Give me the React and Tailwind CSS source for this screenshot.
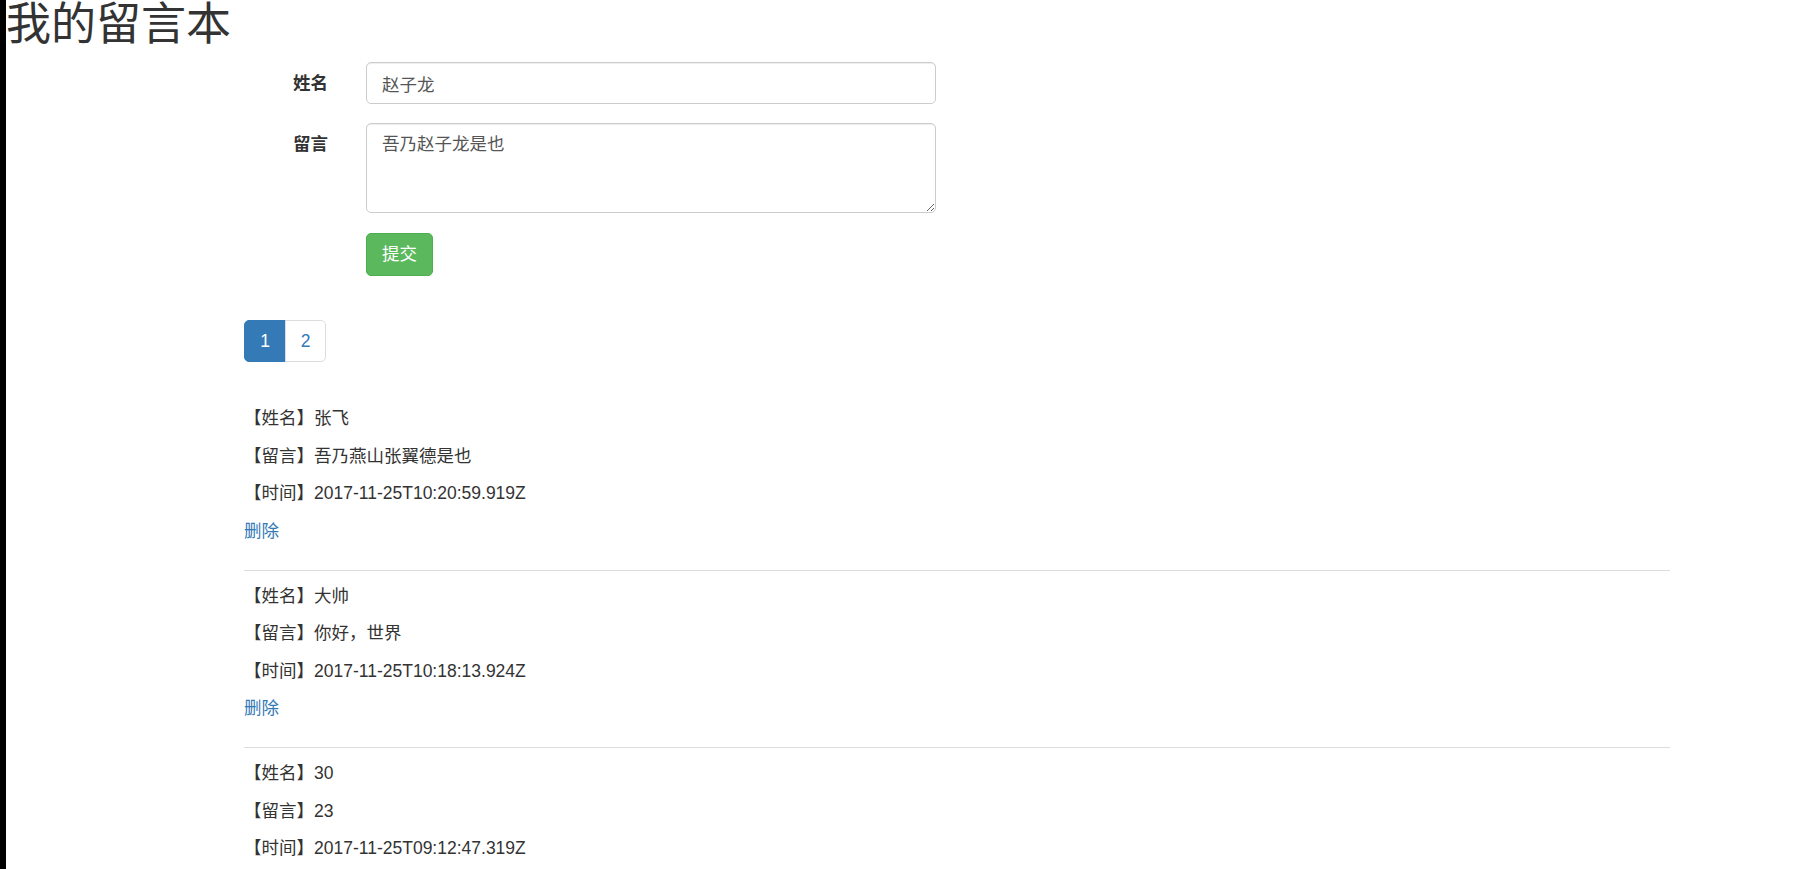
import React from "react";

const items = [
  { name: "张飞", msg: "吾乃燕山张翼德是也", time: "2017-11-25T10:20:59.919Z" },
  { name: "大帅", msg: "你好，世界", time: "2017-11-25T10:18:13.924Z" },
  { name: "30", msg: "23", time: "2017-11-25T09:12:47.319Z" },
];

function Item({ it }) {
  return (
    <div>
      <p className="leading-[25px] mb-[12.5px]">【姓名】{it.name}</p>
      <p className="leading-[25px] mb-[12.5px]">【留言】{it.msg}</p>
      <p className="leading-[25px] mb-[12.5px]">【时间】{it.time}</p>
      <div className="leading-[25px]">
        <a href="#" className="text-[#337ab7] no-underline">删除</a>
      </div>
      <hr className="mt-[26px] mb-[13px] border-0 border-t border-[#dddddd]" />
    </div>
  );
}

export default function App() {
  return (
    <div className="h-[869px] overflow-hidden bg-white border-l-[6px] border-black text-[#333333] text-[17.5px] font-[family-name:'Liberation_Sans','Noto_Sans_CJK_SC',sans-serif]">
      <h1 className="text-[45px] leading-[1.1] font-normal text-[#333333]">我的留言本</h1>

      <div className="ml-[238px] w-[1426px]">
        <form className="mt-[12.5px]" onSubmit={(e) => e.preventDefault()}>
          <div className="flex items-start">
            <label className="w-[84px] text-right font-bold pt-[8.75px] leading-[25px]">姓名</label>
            <input
              type="text"
              defaultValue="赵子龙"
              className="ml-[38px] w-[570px] h-[42px] px-[15px] py-[7.5px] leading-[25px] text-[#555555] bg-white border border-[#cccccc] rounded-[5px] shadow-[inset_0_1px_1px_rgba(0,0,0,0.075)] outline-none"
            />
          </div>
          <div className="flex items-start mt-[19px]">
            <label className="w-[84px] text-right font-bold pt-[8.75px] leading-[25px]">留言</label>
            <textarea
              defaultValue="吾乃赵子龙是也"
              className="ml-[38px] w-[570px] h-[90px] px-[15px] py-[7.5px] leading-[25px] text-[#555555] bg-white border border-[#cccccc] rounded-[5px] shadow-[inset_0_1px_1px_rgba(0,0,0,0.075)] outline-none"
            />
          </div>
          <div className="mt-[20px] ml-[122px]">
            <button
              type="submit"
              className="h-[43px] px-[15px] leading-[25px] text-white bg-[#5cb85c] border border-[#4cae4c] rounded-[5px]"
            >
              提交
            </button>
          </div>
        </form>

        <div className="mt-[44px] flex">
          <a href="#" className="h-[42px] w-[42px] flex items-center justify-center bg-[#337ab7] border border-[#337ab7] text-white rounded-l-[5px]">1</a>
          <a href="#" className="h-[42px] w-[41px] -ml-px flex items-center justify-center bg-white border border-[#dddddd] text-[#337ab7] rounded-r-[5px]">2</a>
        </div>

        <div className="mt-[44px]">
          {items.map((it, i) => (
            <Item key={i} it={it} />
          ))}
        </div>
      </div>
    </div>
  );
}
